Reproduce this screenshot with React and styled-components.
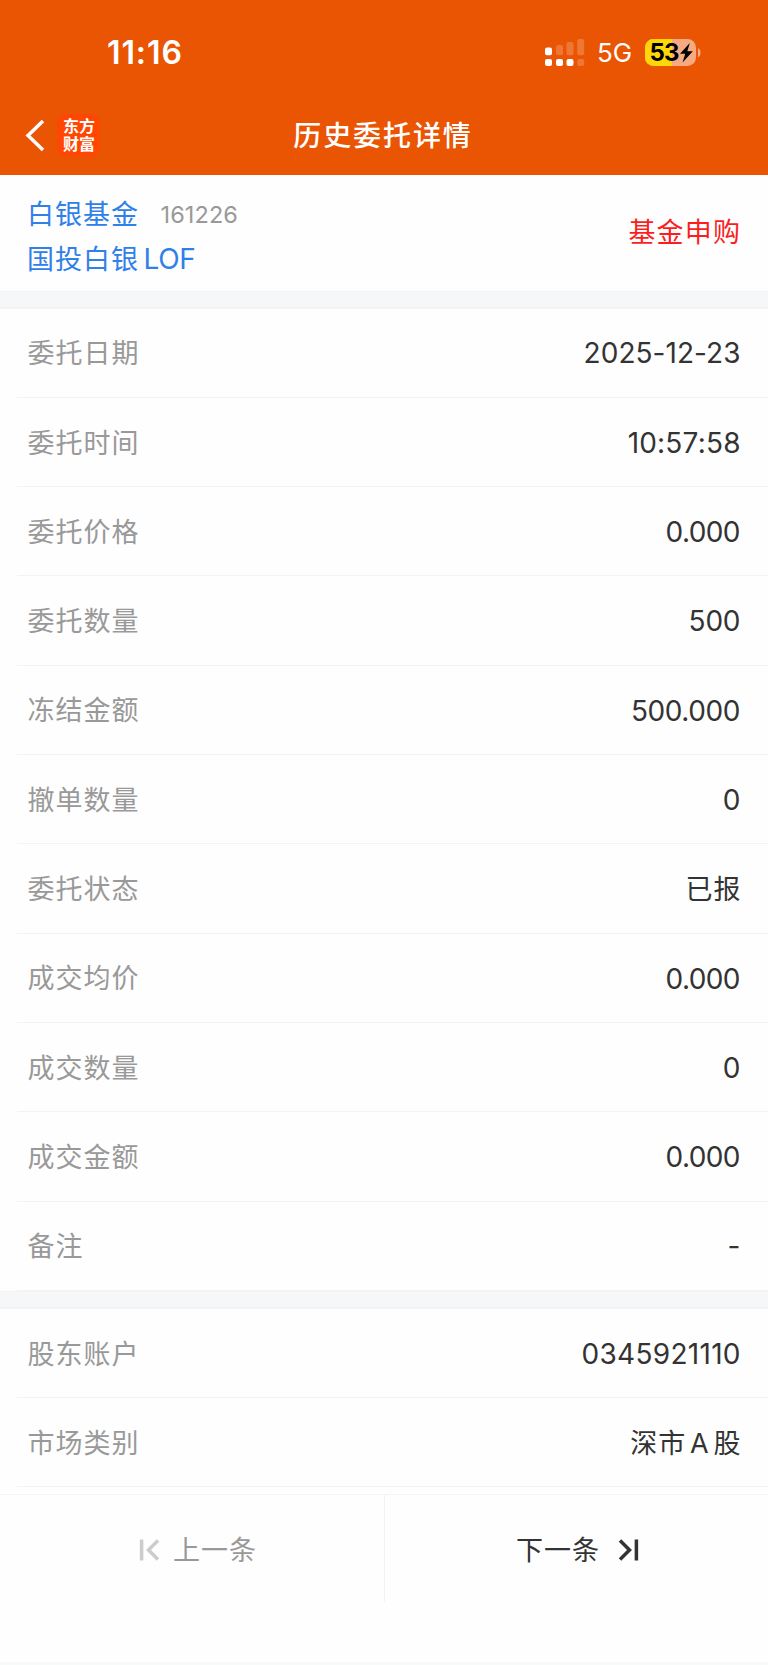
import React from "react";
import styled, { createGlobalStyle } from "styled-components";

const GlobalStyle = createGlobalStyle`
  * { box-sizing: border-box; }
  body {
    margin: 0;
    background: #fefefe;
    font-family: Inter, "Noto Sans CJK SC", sans-serif;
    color: #333;
  }
`;
const Page = styled.div`
  width: 768px;
  height: 1665px;
  display: flex;
  flex-direction: column;
  overflow: hidden;
  border-bottom: 3px solid #f8f9f9;
`;
const Header = styled.header`
  height: 174.6px;
  flex: none;
  background: #ea5504;
  color: #fff;
`;
const StatusBar = styled.div`
  height: 97px;
  padding: 8px 67px 0 107px;
  display: flex;
  align-items: center;
`;
const Clock = styled.span`
  flex: 1;
  font-size: 32px;
  font-weight: 600;
  line-height: 40px;
  letter-spacing: 0.9px;
`;
const Network = styled.span`
  width: 35px;
  margin: 0 13px 0 11px;
  font-size: 26px;
  line-height: 40px;
  letter-spacing: -0.1px;
  padding-top: 1px;
`;
const NavBar = styled.nav`
  height: 77px;
  padding-left: 25px;
  display: grid;
  grid-template-columns: 32px 203px 246px;
  align-items: center;
`;
const Logo = styled.div`
  width: 43px;
  height: 43px;
  padding: 4px 0 0 6px;
  border-radius: 9px;
  background: #ff4602;
  font-size: 16px;
  font-weight: 700;
  line-height: 17.5px;
`;
const Title = styled.h1`
  margin: 0;
  padding-top: 1px;
  text-align: center;
  font-size: 28px;
  font-weight: 500;
  line-height: 40px;
  letter-spacing: 1.9px;
  white-space: nowrap;
`;
const Summary = styled.section`
  height: 116px;
  flex: none;
  padding: 0 28px 0 27px;
  display: flex;
  align-items: center;
  justify-content: space-between;
`;
const FundNames = styled.div`
  padding-top: 10px;
`;
const FundLine = styled.div`
  height: 44.5px;
  display: flex;
  align-items: center;
  gap: ${(props) => props.$gap || 0}px;
  color: #2f80e8;
`;
const Text = styled.span`
  font-size: ${(props) => props.$size || 27}px;
  line-height: 40px;
  letter-spacing: ${(props) => props.$spacing ?? 1}px;
  word-spacing: ${(props) => props.$wordSpacing || 0}px;
  margin-right: ${(props) => -(props.$spacing ?? 1)}px;
  color: ${(props) => props.$color || "inherit"};
  white-space: nowrap;
`;
const NumberText = styled(Text)`
  padding-bottom: 1.5px;
`;
const Band = styled.div`
  height: 18px;
  flex: none;
  background: #f6f7f9;
  border-top: 1px solid #f3f3f3;
  border-bottom: 2px solid #f3f3f4;
`;
const Row = styled.div`
  height: 89.3px;
  flex: none;
  margin-left: 17px;
  padding: 3px 27.5px 0 10.5px;
  display: flex;
  align-items: center;
  justify-content: space-between;
  border-bottom: 1px solid #f3f3f3;
`;
const Footer = styled.footer`
  height: 107px;
  margin-top: 7px;
  flex: none;
  display: grid;
  grid-template-columns: 385px 383px;
  border-top: 1px solid #f4f4f4;
`;
const PagerButton = styled.button`
  height: 107px;
  padding: ${(props) => (props.$next ? "2px 0 0 131px" : "2px 0 0 139px")};
  display: flex;
  align-items: center;
  gap: ${(props) => (props.$next ? 19 : 13)}px;
  border: 0;
  border-right: ${(props) => (props.$next ? "0" : "1px solid #f3f3f3")};
  background: none;
  font-family: inherit;
  color: ${(props) => (props.$next ? "#333" : "#999")};
`;
const PagerText = styled(Text)`
  padding-top: 2px;
`;

const orderRows = [
  { label: "委托日期", value: "2025-12-23", spacing: 0.05 },
  { label: "委托时间", value: "10:57:58", spacing: 0.2 },
  { label: "委托价格", value: "0.000", spacing: -0.6 },
  { label: "委托数量", value: "500", spacing: -0.2 },
  { label: "冻结金额", value: "500.000", spacing: -0.4 },
  { label: "撤单数量", value: "0", spacing: 0 },
  { label: "委托状态", value: "已报", cjk: true },
  { label: "成交均价", value: "0.000", spacing: -0.6 },
  { label: "成交数量", value: "0", spacing: 0 },
  { label: "成交金额", value: "0.000", spacing: -0.6 },
  { label: "备注", value: "-", spacing: 0 },
];
const accountRows = [
  { label: "股东账户", value: "0345921110", spacing: 0.3 },
  { label: "市场类别", value: "深市 A 股", cjk: true, wordSpacing: -4.8 },
];

function Signal() {
  return (
    <svg width="41" height="28" viewBox="0 0 41 28" fill="#fff">
      <rect x="0" y="8.5" width="7" height="7.7" rx="2" />
      <rect x="11" y="6" width="7" height="10.2" rx="2" opacity=".2" />
      <rect x="21.5" y="3" width="7" height="13.2" rx="2" opacity=".2" />
      <rect x="32.2" y="0" width="7" height="16.2" rx="2" opacity=".2" />
      <rect x="0" y="20" width="7" height="7" rx="2" />
      <rect x="11" y="20" width="7" height="7" rx="2" />
      <rect x="21.5" y="20" width="7" height="7" rx="2" />
      <rect x="32.2" y="20" width="7" height="7" rx="2" opacity=".2" />
    </svg>
  );
}

function Battery() {
  return (
    <svg width="56" height="28" viewBox="0 0 56 28">
      <rect x="0" y="0" width="51" height="27" rx="8.5" fill="#f5aa82" />
      <path d="M27 0H8.5A8.5 8.5 0 0 0 0 8.5v10A8.5 8.5 0 0 0 8.5 27H27z" fill="#ffd60a" />
      <path d="M53 9.2c3.4 1.5 3.4 7.5 0 9z" fill="#f5aa82" />
      <text x="4.6" y="22.4" fontFamily="Inter" fontWeight="700" fontSize="24" textLength="30" fill="#000">53</text>
      <path d="M44.8 4 35 14.8h5.2L37.6 23.6l10.2-11.4h-5.5z" fill="#000" />
    </svg>
  );
}

function DetailRow({ row }) {
  return (
    <Row>
      <Text $color="#999">{row.label}</Text>
      {row.cjk ? (
        <Text $wordSpacing={row.wordSpacing}>{row.value}</Text>
      ) : (
        <NumberText $size={28} $spacing={row.spacing}>{row.value}</NumberText>
      )}
    </Row>
  );
}

function App() {
  return (
    <Page>
      <GlobalStyle />
      <Header>
        <StatusBar>
          <Clock>11:16</Clock>
          <Signal />
          <Network>5G</Network>
          <Battery />
        </StatusBar>
        <NavBar>
          <svg width="20" height="32" viewBox="0 0 20 32" fill="none" stroke="#fff" strokeWidth="3.5">
            <path d="M18 1 3 15.5 18 30" />
          </svg>
          <Logo>东方<br />财富</Logo>
          <Title>历史委托详情</Title>
        </NavBar>
      </Header>
      <Summary>
        <FundNames>
          <FundLine $gap={22.5}>
            <Text>白银基金</Text>
            <NumberText $size={23.5} $spacing={0.1} $color="#999">161226</NumberText>
          </FundLine>
          <FundLine $gap={5.5}>
            <Text>国投白银</Text>
            <NumberText $size={28} $spacing={-0.4}>LOF</NumberText>
          </FundLine>
        </FundNames>
        <Text $spacing={1.2} $color="#fa1e1e">基金申购</Text>
      </Summary>
      <Band />
      {orderRows.map((row) => <DetailRow key={row.label} row={row} />)}
      <Band />
      {accountRows.map((row) => <DetailRow key={row.label} row={row} />)}
      <Footer>
        <PagerButton>
          <svg width="21" height="22" viewBox="0 0 21 22" fill="none" stroke="#ccc" strokeWidth="3.5">
            <path d="M2.6 0.5v21M19 1.5 9.5 11 19 20.5" />
          </svg>
          <PagerText>上一条</PagerText>
        </PagerButton>
        <PagerButton $next>
          <PagerText>下一条</PagerText>
          <svg width="21" height="22" viewBox="0 0 21 22" fill="none" stroke="#333" strokeWidth="3.5">
            <path d="M18.4 0.5v21M2 1.5 11.5 11 2 20.5" />
          </svg>
        </PagerButton>
      </Footer>
    </Page>
  );
}
export default App;
